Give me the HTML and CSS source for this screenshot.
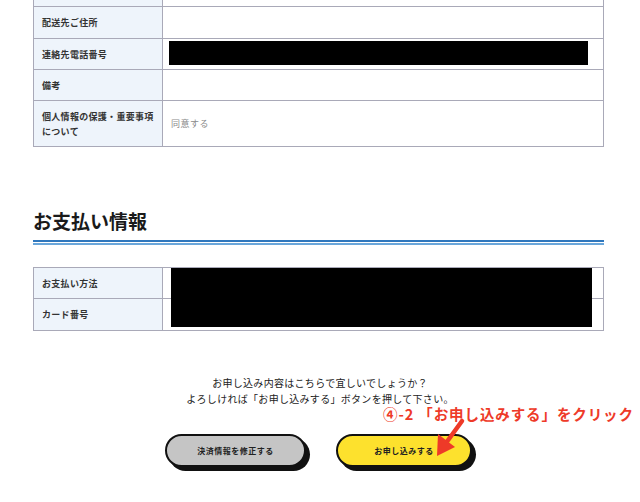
FILE: index.html
```html
<!DOCTYPE html>
<html lang="ja">
<head>
<meta charset="utf-8">
<link rel="stylesheet" href="styles.css">
</head>
<body>
<div class="page">
  <div class="info-table first">
    <div class="row r-top"><div class="label"></div><div class="value"></div></div>
    <div class="row r-addr"><div class="label">配送先ご住所</div><div class="value"></div></div>
    <div class="row r-tel"><div class="label">連絡先電話番号</div><div class="value"><div class="redact tel"></div></div></div>
    <div class="row r-note"><div class="label">備考</div><div class="value"></div></div>
    <div class="row r-priv"><div class="label">個人情報の保護・重要事項<br>について</div><div class="value muted">同意する</div></div>
  </div>

  <h2 class="section-title">お支払い情報</h2>
  <div class="title-rule"></div>

  <div class="info-table pay">
    <div class="row r-pay"><div class="label">お支払い方法</div><div class="value"></div></div>
    <div class="row r-card"><div class="label">カード番号</div><div class="value"></div></div>
    <div class="redact payblock"></div>
  </div>

  <div class="confirm">
    <p>お申し込み内容はこちらで宜しいでしょうか？</p>
    <p>よろしければ「お申し込みする」ボタンを押して下さい。</p>
  </div>

  <div class="actions">
    <button class="btn btn-gray">決済情報を修正する</button>
    <button class="btn btn-yellow">お申し込みする</button>
  </div>

  <div class="annotation">④-2 「お申し込みする」をクリック</div>
  <svg class="arrow" width="640" height="502" viewBox="0 0 640 502">
    <line x1="462" y1="421" x2="446" y2="443" stroke="#ee3a28" stroke-width="4.5" stroke-linecap="round"/>
    <polygon points="437,456 438,434 455,447" fill="#ee3a28"/>
  </svg>
</div>
</body>
</html>
```
FILE: styles.css
```css
html, body {
  margin: 0;
  padding: 0;
  background: #fff;
}
body {
  font-family: "Noto Sans CJK JP", "Noto Sans", sans-serif;
  color: #222;
  width: 640px;
  height: 502px;
  overflow: hidden;
}
.page {
  position: relative;
  display: flow-root;
  width: 640px;
  height: 502px;
  padding-left: 33px;
  box-sizing: border-box;
}
.info-table {
  width: 571px;
  border: 1px solid #a9a9b8;
  border-top: none;
  box-sizing: border-box;
  position: relative;
}
.info-table.first {
  margin-top: -26px;
}
.row {
  display: grid;
  grid-template-columns: 129px 1fr;
  border-top: 1px solid #a9a9b8;
}
.label {
  background: #eef4fb;
  border-right: 1px solid #a9a9b8;
  font-size: 9px;
  font-weight: bold;
  color: #333;
  padding: 0 8px;
  display: flex;
  align-items: center;
  line-height: 15px;
  letter-spacing: 0.3px;
}
.value {
  position: relative;
  display: flex;
  align-items: center;
  padding: 0 8px;
  font-size: 9px;
}
.muted {
  color: #8a8a8a;
  letter-spacing: 0.5px;
}
.r-top { height: 31px; }
.r-addr { height: 31px; }
.r-tel { height: 30px; }
.r-note { height: 30px; }
.r-priv { height: 45px; }
.r-pay { height: 30px; }
.r-card { height: 31px; }

.redact {
  background: #000;
}
.redact.tel {
  position: absolute;
  left: 6px;
  top: 2px;
  width: 419px;
  height: 24px;
}
.redact.payblock {
  position: absolute;
  left: 137px;
  top: 1px;
  width: 421px;
  height: 59px;
}

.section-title {
  margin: 62px 0 0;
  font-size: 19px;
  line-height: 24px;
  font-weight: bold;
  color: #1a1a1a;
}
.title-rule {
  width: 571px;
  margin-top: 7px;
  border-top: 2px solid #2f77bd;
  border-bottom: 2px solid #6aa6da;
  box-sizing: content-box;
  height: 1px;
}
.info-table.pay {
  margin-top: 22px;
}

.confirm {
  margin: 44px 0 0 -33px;
  width: 640px;
  text-align: center;
  font-size: 10px;
  line-height: 16px;
  color: #222;
  letter-spacing: 0.3px;
}
.confirm p {
  margin: 0;
}

.actions {
  margin: 27px 0 0 132px;
  display: flex;
  gap: 30px;
}
.btn {
  height: 33px;
  border: 2px solid #111;
  border-radius: 17px;
  box-shadow: 4px 4px 0 #111;
  font-family: "Noto Sans CJK JP", "Noto Sans", sans-serif;
  font-size: 8px;
  font-weight: bold;
  color: #222;
  letter-spacing: 0.5px;
  padding: 0;
}
.btn-gray { background: #c5c5c5; width: 141px; }
.btn-yellow { background: #fde12d; width: 136px; }

.annotation {
  position: absolute;
  left: 383px;
  top: 404px;
  font-size: 14.5px;
  line-height: 20px;
  font-weight: bold;
  color: #ee3a28;
  white-space: nowrap;
  letter-spacing: 0.9px;
}
.arrow {
  position: absolute;
  left: 0;
  top: 0;
  pointer-events: none;
}
```
